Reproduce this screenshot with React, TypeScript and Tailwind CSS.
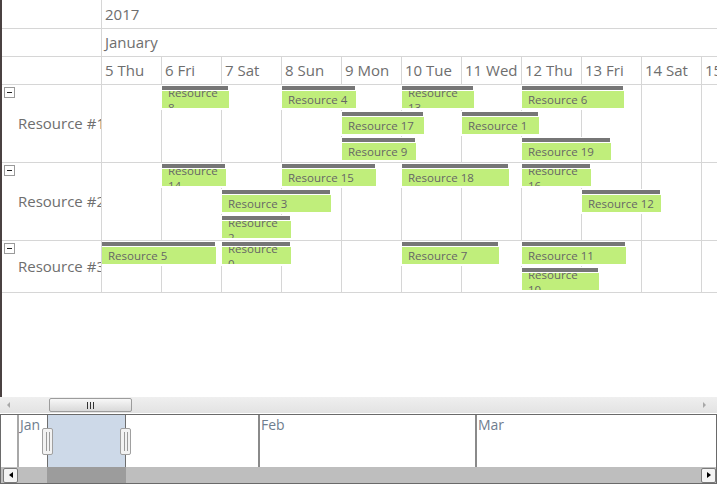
type Ev = { name: string; row: number; lane: number; left: number; w: number; wrap?: boolean };

const days = ["5 Thu", "6 Fri", "7 Sat", "8 Sun", "9 Mon", "10 Tue", "11 Wed", "12 Thu", "13 Fri", "14 Sat", "15 Sun"];

const rows = [
  { label: "Resource #1", h: "h-[78px]" },
  { label: "Resource #2", h: "h-[78px]" },
  { label: "Resource #3", h: "h-[52px]" },
];

const events: Ev[] = [
  { name: "Resource 8", row: 0, lane: 0, left: 60, w: 67, wrap: true },
  { name: "Resource 4", row: 0, lane: 0, left: 180, w: 74 },
  { name: "Resource 13", row: 0, lane: 0, left: 300, w: 72, wrap: true },
  { name: "Resource 6", row: 0, lane: 0, left: 420, w: 102 },
  { name: "Resource 17", row: 0, lane: 1, left: 240, w: 82 },
  { name: "Resource 1", row: 0, lane: 1, left: 360, w: 77 },
  { name: "Resource 9", row: 0, lane: 2, left: 240, w: 74 },
  { name: "Resource 19", row: 0, lane: 2, left: 420, w: 89 },
  { name: "Resource 14", row: 1, lane: 0, left: 60, w: 64, wrap: true },
  { name: "Resource 15", row: 1, lane: 0, left: 180, w: 94 },
  { name: "Resource 18", row: 1, lane: 0, left: 300, w: 107 },
  { name: "Resource 16", row: 1, lane: 0, left: 420, w: 69, wrap: true },
  { name: "Resource 3", row: 1, lane: 1, left: 120, w: 109 },
  { name: "Resource 12", row: 1, lane: 1, left: 480, w: 79 },
  { name: "Resource 2", row: 1, lane: 2, left: 120, w: 69, wrap: true },
  { name: "Resource 5", row: 2, lane: 0, left: 0, w: 114 },
  { name: "Resource 0", row: 2, lane: 0, left: 120, w: 69, wrap: true },
  { name: "Resource 7", row: 2, lane: 0, left: 300, w: 97 },
  { name: "Resource 11", row: 2, lane: 0, left: 420, w: 104 },
  { name: "Resource 10", row: 2, lane: 1, left: 420, w: 77, wrap: true },
];

function EventBar({ e }: { e: Ev }) {
  const [word, num] = e.name.split(" ");
  return (
    <div
      className="absolute bg-white px-px pt-px pb-[2px]"
      style={{ left: e.left - 1, top: e.lane * 26, width: e.w + 2 }}
    >
      <div className="h-[4px] bg-[#767676]" style={{ width: e.w - 1 }} />
      <div className="mt-px h-[17px] bg-[#c0ee7b] overflow-hidden flex flex-col justify-center pl-[6px] text-[11.5px] leading-[15px] text-[#666] whitespace-nowrap">
        {e.wrap ? (
          <>
            <span>{word}</span>
            <span>{num}</span>
          </>
        ) : (
          <span>{e.name}</span>
        )}
      </div>
    </div>
  );
}

function Minus() {
  return (
    <div className="w-[11px] h-[11px] border border-[#9a9a9a] bg-white flex items-center justify-center">
      <div className="w-[5px] h-px bg-[#222]" />
    </div>
  );
}

function Handle() {
  return (
    <div className="w-[11px] h-[27px] rounded-[2px] border border-[#a0a0a0] bg-[#f2f2f2] flex items-center justify-center gap-[2px]">
      <div className="w-px h-[19px] bg-[#9a9a9a]" />
      <div className="w-px h-[19px] bg-[#9a9a9a]" />
    </div>
  );
}

export default function App() {
  return (
    <div className="w-[717px] h-[484px] overflow-hidden bg-white flex flex-col font-['Open_Sans',sans-serif] select-none">
      {/* scheduler area */}
      <div className="h-[397px] border-l-2 border-[#4a4141] flex flex-col">
        {/* year */}
        <div className="h-[29px] flex border-b border-[#d6d6d6] shrink-0">
          <div className="w-[100px] shrink-0 border-r border-[#d6d6d6]" />
          <div className="flex-1 flex items-center pl-[3px] text-[15px] text-[#6e6e6e]">2017</div>
        </div>
        {/* month */}
        <div className="h-[28px] flex border-b border-[#d6d6d6] shrink-0">
          <div className="w-[100px] shrink-0 border-r border-[#d6d6d6]" />
          <div className="flex-1 flex items-center pl-[3px] text-[15px] text-[#6e6e6e]">January</div>
        </div>
        {/* days */}
        <div className="h-[28px] flex border-b border-[#d6d6d6] shrink-0">
          <div className="w-[100px] shrink-0 border-r border-[#d6d6d6]" />
          <div className="flex-1 flex overflow-hidden">
            {days.map((d) => (
              <div
                key={d}
                className="w-[60px] shrink-0 border-r border-[#d6d6d6] flex items-center pl-[3px] text-[15px] text-[#6e6e6e] whitespace-nowrap"
              >
                {d}
              </div>
            ))}
          </div>
        </div>
        {/* resource rows */}
        {rows.map((r, ri) => (
          <div key={r.label} className={`${r.h} flex border-b border-[#d6d6d6] shrink-0`}>
            <div className="w-[100px] shrink-0 border-r border-[#d6d6d6] grid overflow-hidden">
              <div className="col-start-1 row-start-1 self-start mt-[2px] ml-[2px]">
                <Minus />
              </div>
              <div className="col-start-1 row-start-1 self-center pl-[16px] text-[15px] text-[#6e6e6e] whitespace-nowrap">
                {r.label}
              </div>
            </div>
            <div className="flex-1 relative overflow-hidden flex">
              {days.map((d) => (
                <div key={d} className="w-[60px] shrink-0 border-r border-[#d6d6d6]" />
              ))}
              {events
                .filter((e) => e.row === ri)
                .map((e) => (
                  <EventBar key={e.name} e={e} />
                ))}
            </div>
          </div>
        ))}
      </div>

      {/* horizontal scrollbar */}
      <div className="h-[17px] shrink-0">
        <div className="h-[16px] bg-gradient-to-b from-[#efefef] to-[#e3e3e3] flex items-center">
          <div className="w-[49px] shrink-0 flex items-center pl-[7px]">
            <div className="w-0 h-0 border-y-[3px] border-y-transparent border-r-[3px] border-r-[#a8a8a8]" />
          </div>
          <div className="w-[83px] h-[14px] shrink-0 rounded-[2px] border border-[#9c9c9c] bg-gradient-to-b from-[#f7f7f7] to-[#d9d9d9] flex items-center justify-center gap-[2px]">
            <div className="w-px h-[7px] bg-[#333]" />
            <div className="w-px h-[7px] bg-[#333]" />
            <div className="w-px h-[7px] bg-[#333]" />
          </div>
          <div className="flex-1" />
          <div className="w-[14px] shrink-0 flex items-center">
            <div className="w-0 h-0 border-y-[3px] border-y-transparent border-l-[3px] border-l-[#a8a8a8]" />
          </div>
        </div>
      </div>

      {/* overview */}
      <div className="h-[70px] shrink-0 border-t border-b border-l border-r border-[#6a6a6a] flex flex-col">
        <div className="h-[52px] relative flex text-[14px] leading-[19px] text-[#6f7d8e]">
          <div className="w-[16px] shrink-0" />
          <div className="w-[241px] shrink-0 border-l-2 border-[#a8a8a8] pl-px">Jan</div>
          <div className="w-[217px] shrink-0 border-l-2 border-[#8a8a8a] pl-px">Feb</div>
          <div className="flex-1 border-l-2 border-[#8a8a8a] pl-px">Mar</div>
          {/* selected range */}
          <div className="absolute left-[46px] top-0 bottom-0 w-[79px] bg-[#cdd9e8] border-x border-[#6e6e6e]" />
          <div className="absolute left-[41px] top-[13px]">
            <Handle />
          </div>
          <div className="absolute left-[119px] top-[13px]">
            <Handle />
          </div>
        </div>
        <div className="h-[16px] bg-[#bebebe] flex items-center">
          <div className="w-[2px] shrink-0" />
          <div className="w-[15px] h-[15px] shrink-0 rounded-[2px] border border-[#7a7a7a] bg-[#f4f4f4] flex items-center justify-center">
            <div className="w-0 h-0 border-y-[3px] border-y-transparent border-r-[4px] border-r-black" />
          </div>
          <div className="w-[29px] shrink-0" />
          <div className="w-[79px] h-full shrink-0 bg-[#9c9c9c]" />
          <div className="flex-1" />
          <div className="w-[15px] h-[15px] shrink-0 rounded-[2px] border border-[#7a7a7a] bg-[#f4f4f4] flex items-center justify-center">
            <div className="w-0 h-0 border-y-[3px] border-y-transparent border-l-[4px] border-l-black" />
          </div>
        </div>
      </div>
    </div>
  );
}
